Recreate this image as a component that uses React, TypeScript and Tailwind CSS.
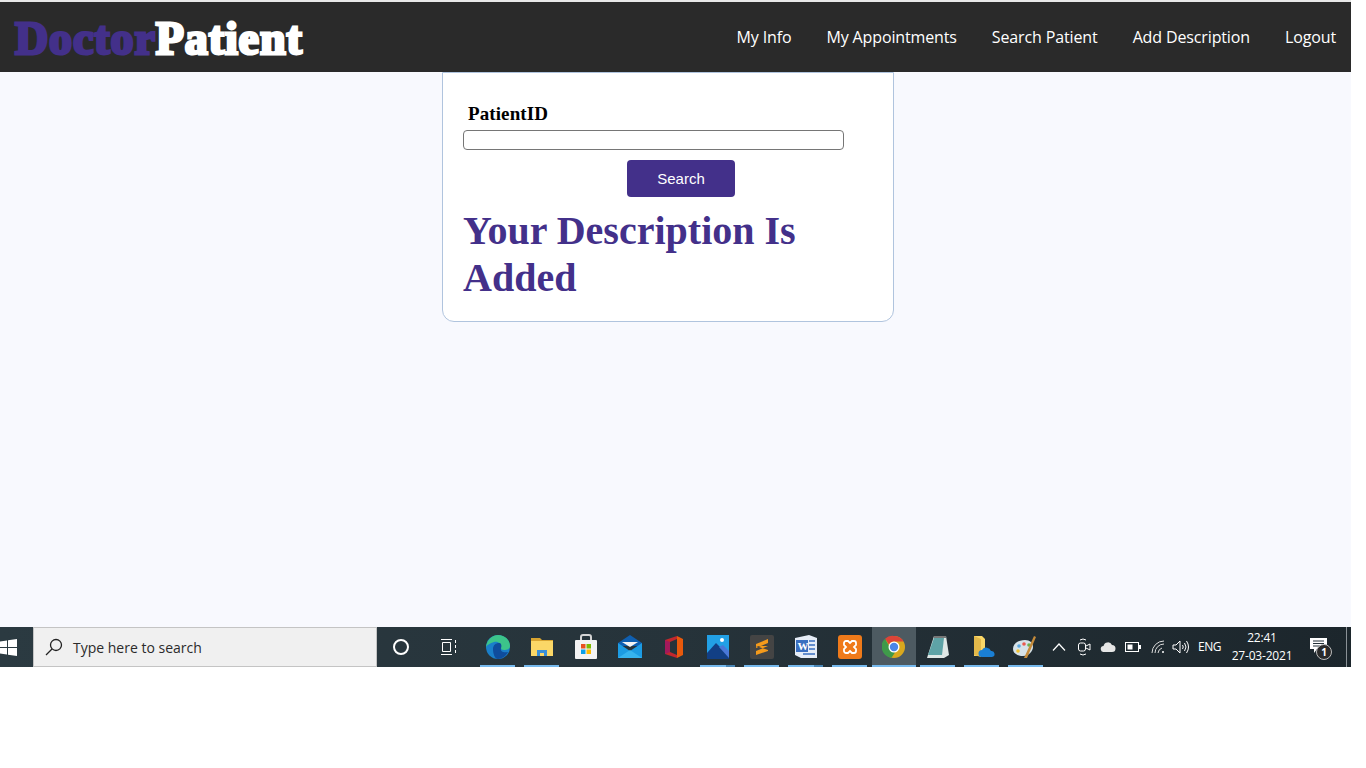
const navLinks = ['My Info', 'My Appointments', 'Search Patient', 'Add Description', 'Logout'];

// Taskbar icons, drawn by hand.
const Edge = () => (
  <svg width="26" height="26" viewBox="0 0 26 26">
    <circle cx="13" cy="13" r="12" fill="#1a7fc9" />
    <path d="M1 13C2 5 8 1 13 1c7 0 12 5 12 11 0 3-3 4-6 4-2 0-3-1-3-2 1-4-3-7-7-6-4 1-7 3-8 5z" fill="#3cc48a" />
    <path d="M8 15c0-4 3-6 6-6 2 0 3 2 2 5-1 4 3 5 7 4-2 4-6 7-10 7-3 0-5-5-5-10z" fill="#0f4c9c" />
  </svg>
);
const Folder = () => (
  <svg width="24" height="22" viewBox="0 0 24 22">
    <path d="M1 2h9l2 2h11v16H1z" fill="#d9a531" />
    <rect x="1" y="5" width="22" height="15" fill="#fbd767" />
    <path d="M7 20v-6h10v6h-3v-3h-4v3z" fill="#3a8fd8" />
  </svg>
);
const Store = () => (
  <svg width="24" height="26" viewBox="0 0 24 26">
    <path d="M7 7V3q0-2 2-2h6q2 0 2 2v4" fill="none" stroke="#d4d4d4" strokeWidth="2" />
    <rect x="1" y="6" width="22" height="19" rx="1" fill="#f3f3f3" />
    <rect x="7" y="10" width="4.5" height="4.5" fill="#e8501f" />
    <rect x="12.5" y="10" width="4.5" height="4.5" fill="#7fba00" />
    <rect x="7" y="15.5" width="4.5" height="4.5" fill="#0a9fe8" />
    <rect x="12.5" y="15.5" width="4.5" height="4.5" fill="#ffb900" />
  </svg>
);
const Mail = () => (
  <svg width="24" height="24" viewBox="0 0 24 24">
    <path d="M0 8 12 0l12 8v3H0z" fill="#0f5fb0" />
    <path d="M4 7h16l-8 5z" fill="#f4f4f4" />
    <path d="M0 8l12 8 12-8v15H0z" fill="#1c9ce4" />
    <path d="M0 23 12 15l12 8z" fill="#36b4f0" />
  </svg>
);
const Office = () => (
  <svg width="20" height="24" viewBox="0 0 20 24">
    <path d="M1 5 13 1v3L6 7v10l7 3v3L1 19z" fill="#c2272d" />
    <path d="M1 5l5 2v10l-5 2z" fill="#a3195b" />
    <path d="M13 1l6 3v16l-6 3z" fill="#e8590c" />
  </svg>
);
const Photos = () => (
  <svg width="22" height="24" viewBox="0 0 22 24">
    <rect width="22" height="24" fill="#22a0e6" />
    <circle cx="15" cy="5" r="2" fill="#fff" />
    <path d="M0 18 9 8l13 13v3H0z" fill="#123f85" />
    <path d="M12 12l4-2 6 6v7z" fill="#4a78d8" />
  </svg>
);
const Sublime = () => (
  <div className="flex h-[24px] w-[24px] items-center justify-center rounded-[2px] bg-[#444444]">
    <svg width="14" height="18" viewBox="0 0 14 18">
      <path d="M1 6 13 1v4L1 10zM1 8l12 4v1L1 17v-4l12-5" fill="#f59a1b" />
    </svg>
  </div>
);
const Word = () => (
  <svg width="24" height="24" viewBox="0 0 24 24">
    <path d="M1 3 15 0l8 3v20H7l-6-3z" fill="#e6edf7" />
    <path d="M2 5h12v12H2z" fill="#3a6fc0" />
    <text x="3.5" y="15" fontSize="11" fontWeight="700" fontFamily="Liberation Serif" fill="#fff">W</text>
    <path d="M15 6h6M15 10h6M15 14h6M9 19h12" stroke="#3a6fc0" strokeWidth="1.4" />
  </svg>
);
const Xampp = () => (
  <div className="flex h-[24px] w-[24px] items-center justify-center rounded-[3px] bg-[#ef7a1a]">
    <svg width="16" height="16" viewBox="0 0 16 16">
      <path d="M4 2h2l2 2 2-2h2a2 2 0 0 1 2 2v2l-2 2 2 2v2a2 2 0 0 1-2 2h-2l-2-2-2 2H4a2 2 0 0 1-2-2v-2l2-2-2-2V4a2 2 0 0 1 2-2z" fill="none" stroke="#fff" strokeWidth="1.8" />
    </svg>
  </div>
);
const Chrome = () => (
  <svg width="24" height="24" viewBox="0 0 24 24">
    <circle cx="12" cy="12" r="11" fill="#d9a81e" />
    <path d="M12 1a11 11 0 0 1 9.600 5.500H12A5.500 5.500 0 0 0 7 9.500L3 3.800A11 11 0 0 1 12 1z" fill="#dc4438" />
    <path d="M3 3.800l5 8.700a5 5 0 0 0 5 5l-3.500 5.200A11 11 0 0 1 3 3.800z" fill="#3f9a4a" />
    <circle cx="12" cy="12" r="5.500" fill="#fff" />
    <circle cx="12" cy="12" r="4.200" fill="#4a86e8" />
  </svg>
);
const Notepad = () => (
  <svg width="24" height="24" viewBox="0 0 24 24">
    <path d="M8 1h12l3 19-5 3H1z" fill="#dfe8e6" />
    <path d="M8 3h10l-2 17H2z" fill="#5ea3a6" />
    <path d="M8 1h12v2H8z" fill="#777" />
  </svg>
);
const FolderCloud = () => (
  <svg width="22" height="24" viewBox="0 0 22 24" className="ml-[3px]">
    <path d="M1 1h8l3 3v17H1z" fill="#fbd767" />
    <path d="M1 1l7 3v18l-7-2z" fill="#e4b94a" />
    <path d="M9 22a3.500 3.500 0 0 1 0-7 5 5 0 0 1 9 1 3 3 0 0 1 1 6z" fill="#1a7fd4" />
  </svg>
);
const Paint = () => (
  <svg width="26" height="26" viewBox="0 0 26 26" className="mr-[3px]">
    <path d="M1 15C1 9 7 6 13 6c5 0 8 3 8 7s-4 9-10 9c-6 0-10-3-10-7z" fill="#d6e2e8" />
    <circle cx="7" cy="12" r="1.800" fill="#5aa7e0" />
    <circle cx="12" cy="10" r="1.800" fill="#e85a4f" />
    <circle cx="17" cy="11" r="1.800" fill="#6ab04c" />
    <circle cx="6" cy="17" r="1.800" fill="#f2c230" />
    <path d="M12 24 22 2l2 1-9 21z" fill="#c58b3a" />
  </svg>
);

function AppSlot({ icon, running, stacked, active }: { icon: React.ReactNode; running?: boolean; stacked?: boolean; active?: boolean }) {
  return (
    <div className={`relative flex h-[40px] w-[44px] items-center justify-center ${active ? 'bg-[#4d5a61]' : ''}`}>
      {icon}
      {running && (
        <span className={`absolute bottom-0 h-[2px] bg-[#76b9ed] ${active ? 'inset-x-0' : 'left-[4px] w-[35px]'}`} />
      )}
      {stacked && <span className="absolute bottom-0 left-[30px] h-[2px] w-[9px] bg-[#4a86b5]" />}
    </div>
  );
}

function Taskbar() {
  return (
    <div className="flex h-[40px] items-center bg-gradient-to-r from-[#2b3a41] via-[#26333a] to-[#1c262c] text-white">
      <div className="flex h-[40px] w-[33px] items-center">
        <svg width="17" height="17" viewBox="0 0 17 17" fill="#fff">
          <path d="M0 2.400 7 1.400v6.600H0zM8 1.300 17 0v8H8zM0 9h7v6.600L0 14.600zM8 9h9v8l-9-1.300z" />
        </svg>
      </div>
      <div className="flex h-[40px] w-[344px] items-center border border-[#c4c4c4] bg-[#f0f0f0] pl-[11px]">
        <svg width="18" height="18" viewBox="0 0 18 18" fill="none" stroke="#222" strokeWidth="1.300">
          <circle cx="11" cy="7" r="5.500" />
          <path d="M7 11 1 17" />
        </svg>
        <span className="ml-[10px] font-['Open_Sans',sans-serif] text-[14px] text-[#2b2b2b]">Type here to search</span>
      </div>
      <div className="flex w-[44px] justify-center pl-[3px]">
        <span className="h-[16px] w-[16px] rounded-full border-2 border-white" />
      </div>
      <div className="flex w-[55px] justify-center">
        <svg width="18" height="16" viewBox="0 0 18 16" fill="none" stroke="#fff" strokeWidth="1">
          <path d="M1 .5h11M1 15.500h11M2.500 3.500h8v9h-8zM15.500 1v3M15.500 6v3M15.500 11v3" />
        </svg>
      </div>
      <div className="flex">
        <AppSlot icon={<Edge />} running />
        <AppSlot icon={<Folder />} running />
        <AppSlot icon={<Store />} />
        <AppSlot icon={<Mail />} />
        <AppSlot icon={<Office />} />
        <AppSlot icon={<Photos />} running stacked />
        <AppSlot icon={<Sublime />} running />
        <AppSlot icon={<Word />} running stacked />
        <AppSlot icon={<Xampp />} running />
        <AppSlot icon={<Chrome />} running active />
        <AppSlot icon={<Notepad />} running />
        <AppSlot icon={<FolderCloud />} running />
        <AppSlot icon={<Paint />} running />
      </div>
      <div className="ml-auto flex h-[40px] items-center">
        <svg width="14" height="8" viewBox="0 0 14 8" fill="none" stroke="#fff" strokeWidth="1.200" className="mr-[11px]">
          <path d="M1 7.500 7 1l6 6.500" />
        </svg>
        <svg width="14" height="18" viewBox="0 0 14 18" fill="none" stroke="#fff" strokeWidth="1" className="mr-[9px]">
          <path d="M3 2q3-2 6 0M3 16q3 2 6 0" />
          <rect x="1.500" y="5" width="7" height="8" rx="2" />
          <path d="M9 8l4-2v6l-4-2" />
        </svg>
        <svg width="16" height="10" viewBox="0 0 16 10" fill="#e6e6e6" className="mr-[9px]">
          <path d="M4 10a3 3 0 0 1-.500-6 4.500 4.500 0 0 1 8.500-1 3.500 3.500 0 0 1 0 7z" />
        </svg>
        <svg width="16" height="10" viewBox="0 0 16 10" className="mr-[10px]">
          <rect x=".5" y=".5" width="13" height="9" fill="none" stroke="#fff" />
          <rect x="2.500" y="2.500" width="5" height="5" fill="#fff" />
          <rect x="14" y="3" width="2" height="4" fill="#fff" />
        </svg>
        <svg width="14" height="14" viewBox="0 0 14 14" fill="none" stroke="#dcdcdc" strokeWidth="1" className="mr-[7px]">
          <path d="M1 13A12 12 0 0 1 13 1M4 13a9 9 0 0 1 9-9M7 13a6 6 0 0 1 4-5" />
          <circle cx="12" cy="12" r="1" fill="#fff" stroke="none" />
        </svg>
        <svg width="17" height="14" viewBox="0 0 17 14" fill="none" stroke="#fff" strokeWidth="1" className="mr-[9px]">
          <path d="M1 5h3l4-4v12L4 9H1zM10.500 5q1.500 2 0 4M12.500 3q3 4 0 8M14.500 1q4 6 0 12" />
        </svg>
        <span className="w-[24px] whitespace-nowrap font-['Open_Sans',sans-serif] text-[12px] tracking-[-0.5px]">ENG</span>
        <div className="ml-[10px] flex w-[60px] flex-col items-center whitespace-nowrap font-['Open_Sans',sans-serif] text-[12px] leading-[18px] tracking-[-0.2px]">
          <span>22:41</span>
          <span>27-03-2021</span>
        </div>
        <div className="relative ml-[18px] mr-[18px] h-[24px] w-[18px]">
          <svg width="17" height="15" viewBox="0 0 17 15" fill="#fff" className="absolute left-0 top-[3px]">
            <path d="M0 0h17v11H7l-3 4v-4H0z" />
            <path d="M3 3h11M3 5.500h11M3 8h8" stroke="#26333a" strokeWidth="1" />
          </svg>
          <span className="absolute left-[6px] top-[9px] flex h-[16px] w-[16px] items-center justify-center rounded-full border border-[#bbbbbb] bg-[#2a2a2a] font-['Open_Sans',sans-serif] text-[10px] font-bold leading-none">
            1
          </span>
        </div>
        <span className="h-[40px] w-[1px] bg-[#8a9196]" />
        <span className="w-[4px]" />
      </div>
    </div>
  );
}

export default function App() {
  return (
    <div className="h-[768px] w-[1366px] bg-white">
      <div className="flex h-[667px] w-[1351px] flex-col">
        <div className="h-[2px] bg-[#e8e8e8]" />
        <nav className="flex h-[70px] items-center justify-between bg-[#2a2a2a] px-[15px]">
          <div className="pt-[4px] font-['Liberation_Serif',serif] text-[46px] font-bold leading-none tracking-[0.9px]">
            <span className="text-[#43308a] [-webkit-text-stroke:3px_#43308a]">Doctor</span>
            <span className="text-white [-webkit-text-stroke:3px_#ffffff]">Patient</span>
          </div>
          <div className="flex gap-[35px] font-['Open_Sans',sans-serif] text-[16px] tracking-[-0.13px] text-white">
            {navLinks.map((link) => (
              <a key={link}>{link}</a>
            ))}
          </div>
        </nav>
        <main className="flex flex-1 justify-center bg-[#f8f9fe] pr-[15px]">
          <div className="h-[250px] w-[452px] rounded-b-[12px] border border-[#b0c4de] bg-white pl-[20px]">
            <label className="ml-[5px] mt-[30px] block font-['Liberation_Serif',serif] text-[19px] font-bold leading-[22px] tracking-[0.1px] text-black">
              PatientID
            </label>
            <input className="mt-[5px] block h-[20px] w-[381px] rounded-[4px] border border-[#767676] bg-white" />
            <div className="mt-[10px] flex w-[436px] justify-center">
              <button className="h-[37px] w-[108px] rounded-[4px] bg-[#43308a] pt-[1px] font-['Liberation_Sans',sans-serif] text-[15px] text-white">
                Search
              </button>
            </div>
            <h1 className="mt-[10px] font-['Liberation_Serif',serif] text-[40px] font-bold leading-[47px] text-[#43308a]">
              Your Description Is Added
            </h1>
          </div>
        </main>
        <Taskbar />
      </div>
    </div>
  );
}
